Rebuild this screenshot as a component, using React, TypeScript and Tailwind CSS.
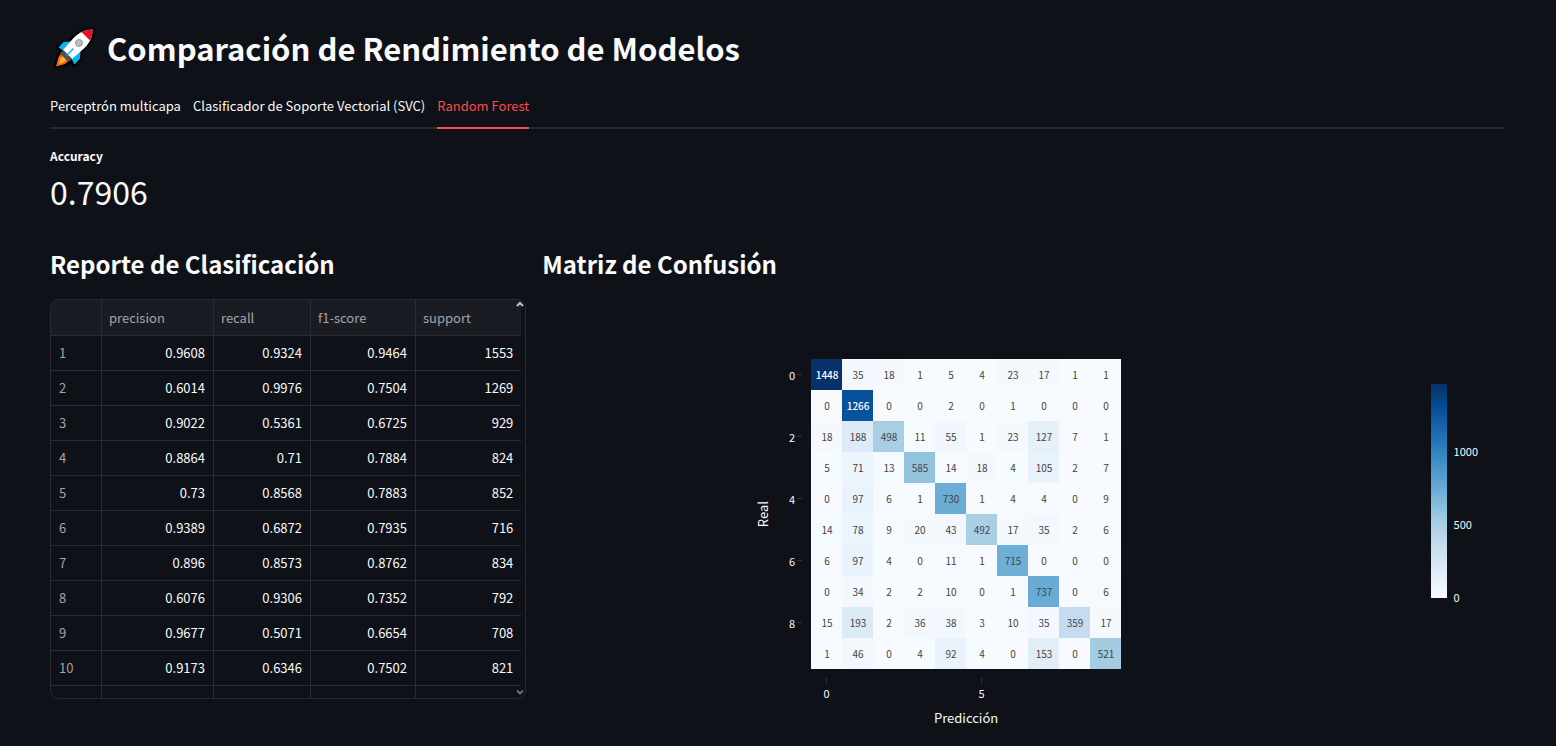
import React from "react";

const report: [string, string, string, string, string][] = [
  ["1", "0.9608", "0.9324", "0.9464", "1553"],
  ["2", "0.6014", "0.9976", "0.7504", "1269"],
  ["3", "0.9022", "0.5361", "0.6725", "929"],
  ["4", "0.8864", "0.71", "0.7884", "824"],
  ["5", "0.73", "0.8568", "0.7883", "852"],
  ["6", "0.9389", "0.6872", "0.7935", "716"],
  ["7", "0.896", "0.8573", "0.8762", "834"],
  ["8", "0.6076", "0.9306", "0.7352", "792"],
  ["9", "0.9677", "0.5071", "0.6654", "708"],
  ["10", "0.9173", "0.6346", "0.7502", "821"],
  ["", "", "", "", ""],
];

const matrix = [
  [1448, 35, 18, 1, 5, 4, 23, 17, 1, 1],
  [0, 1266, 0, 0, 2, 0, 1, 0, 0, 0],
  [18, 188, 498, 11, 55, 1, 23, 127, 7, 1],
  [5, 71, 13, 585, 14, 18, 4, 105, 2, 7],
  [0, 97, 6, 1, 730, 1, 4, 4, 0, 9],
  [14, 78, 9, 20, 43, 492, 17, 35, 2, 6],
  [6, 97, 4, 0, 11, 1, 715, 0, 0, 0],
  [0, 34, 2, 2, 10, 0, 1, 737, 0, 6],
  [15, 193, 2, 36, 38, 3, 10, 35, 359, 17],
  [1, 46, 0, 4, 92, 4, 0, 153, 0, 521],
];

const MAX = 1448;
const blues = [
  [247, 251, 255],
  [222, 235, 247],
  [198, 219, 239],
  [158, 202, 225],
  [107, 174, 214],
  [66, 146, 198],
  [33, 113, 181],
  [8, 81, 156],
  [8, 48, 107],
];

function blue(value: number) {
  const t = (value / MAX) * (blues.length - 1);
  const i = Math.min(Math.floor(t), blues.length - 2);
  const c = blues[i].map((a, k) => Math.round(a + (blues[i + 1][k] - a) * (t - i)));
  return `rgb(${c.join(",")})`;
}

function Rocket() {
  return (
    <svg viewBox="0 0 42 42" className="h-[42px] w-[42px] shrink-0" aria-hidden="true">
      <path
        d="M40 2C33 2 26 5 20.500 10L17 14 10 14.500 4.500 20.500 8 24 5 28.500 2 40 13 37.500 17.500 34 21 38.500 27.500 32 28 25 32 21C38 15 41 9 40 2Z"
        fill="#000"
        stroke="#000"
        strokeWidth="3"
        strokeLinejoin="round"
      />
      <path d="M18 14.500 10.500 15 5.500 20.500 11 24Z" fill="#00b7f1" />
      <path d="M27.500 24 27 31.500 21.500 37.500 18 31Z" fill="#00b7f1" />
      <path d="M8.500 26 16 33.500 12 37 3 39.500 5.500 30Z" fill="#f7630c" />
      <path d="M10 29 13.500 32.500 10.500 35.500 6 37 7 32Z" fill="#ffb02e" />
      <path d="M39.500 2.500C32 2.500 26 5.500 21 10.500L10 23 19 32 31.500 21C37 15.500 39.500 10 39.500 2.500Z" fill="#fff" />
      <path d="M39.500 2.500C35 2.500 31.500 3.500 28.500 5L37 13.500C39 10 39.500 7 39.500 2.500Z" fill="#e81224" />
      <path d="M10 23 7 26.500 15.500 35 19 32Z" fill="#505050" />
      <path d="M13.500 28.500 20.500 21.500" stroke="#00b7f1" strokeWidth="1.500" />
      <circle cx="26" cy="16" r="3.500" fill="#bfbfbf" stroke="#999" strokeWidth="1" />
    </svg>
  );
}

function Chevron({ down = false }: { down?: boolean }) {
  return (
    <svg viewBox="0 0 8 7" className="h-[7px] w-2" aria-hidden="true">
      <path
        d={down ? "M1 1.500 4 4.500 7 1.500" : "M1 5 4 2 7 5"}
        fill="none"
        stroke={down ? "#6b6b6b" : "#c1c1c1"}
        strokeWidth="2"
      />
    </svg>
  );
}

const tabs = ["Perceptrón multicapa", "Clasificador de Soporte Vectorial (SVC)", "Random Forest"];
const headers = ["precision", "recall", "f1-score", "support"];

function ReportTable() {
  return (
    <div className="relative h-[400px] overflow-hidden rounded-lg border border-[#282a30] pr-1">
      <table className="w-full table-fixed border-separate border-spacing-0 text-[13px] leading-5 text-[#fafafa]">
        <colgroup>
          <col className="w-[51px]" />
          <col className="w-[112px]" />
          <col className="w-[97px]" />
          <col className="w-[105px]" />
          <col />
        </colgroup>
        <thead>
          <tr className="h-9 bg-[#1a1c24] text-left text-[#a3a4a8]">
            <th aria-label="index" className="border-r border-b border-[#2b2d33] p-0" />
            {headers.map((h) => (
              <th key={h} scope="col" className="border-r border-b border-[#2b2d33] px-[7px] py-0 font-normal last:border-r-0">
                {h}
              </th>
            ))}
          </tr>
        </thead>
        <tbody>
          {report.map((row, r) => (
            <tr key={r} className="h-[35px]">
              {row.map((v, c) =>
                c === 0 ? (
                  <th key={c} scope="row" className="border-r border-b border-[#2b2d33] px-2 py-0 text-left font-normal text-[#a3a4a8]">
                    {v}
                  </th>
                ) : (
                  <td key={c} className="border-r border-b border-[#2b2d33] px-2 py-0 text-right last:border-r-0">
                    {v}
                  </td>
                ),
              )}
            </tr>
          ))}
        </tbody>
      </table>
      <div className="absolute top-px right-px">
        <Chevron />
      </div>
      <div className="absolute right-px bottom-0.5">
        <Chevron down />
      </div>
    </div>
  );
}

function ConfusionChart() {
  return (
    <div className="flex pt-[60px] text-[11px] leading-4 text-[#fafafa]">
      <div className="grow-[213]" />
      <div className="grid grid-cols-[auto_auto_auto]">
        <div className="flex items-center">
          <span className="rotate-180 text-[13px] [writing-mode:vertical-rl]">Real</span>
        </div>
        <div className="grid grid-rows-5 pr-[9px] pl-[18px]">
          {[0, 2, 4, 6, 8].map((n) => (
            <div key={n} className="flex h-[31px] items-center gap-[2px]">
              <span>{n}</span>
              <span className="h-px w-[5px] bg-[#31333f]" />
            </div>
          ))}
        </div>
        <table className="border-collapse text-center text-[10px] text-[#444]">
          <tbody>
            {matrix.map((row, r) => (
              <tr key={r}>
                {row.map((v, c) => (
                  <td
                    key={c}
                    className={
                      v > 1000
                        ? "h-[31px] w-[31px] min-w-[31px] p-0 pl-px font-medium text-white"
                        : "h-[31px] w-[31px] min-w-[31px] p-0 pl-px"
                    }
                    style={{ backgroundColor: blue(v) }}
                  >
                    {v}
                  </td>
                ))}
              </tr>
            ))}
          </tbody>
        </table>
        <div className="col-start-3 grid grid-cols-2 pt-[9px]">
          {[0, 5].map((n) => (
            <div key={n} className="flex w-[31px] flex-col items-center gap-[2px]">
              <span className="h-[5px] w-px bg-[#31333f]" />
              <span>{n}</span>
            </div>
          ))}
        </div>
        <div className="col-start-3 pt-[9px] text-center text-[13px]">Predicción</div>
      </div>
      <div className="grow-[310]" />
      <div className="flex gap-[7px] pt-[25px] pr-[25px]">
        <div className="h-[214px] w-4 bg-[linear-gradient(to_top,#f7fbff,#deebf7,#c6dbef,#9ecae1,#6baed6,#4292c6,#2171b5,#08519c,#08306b)]" />
        <div className="flex h-[221px] flex-col justify-end gap-[57px]">
          <span>1000</span>
          <span>500</span>
          <span>0</span>
        </div>
      </div>
    </div>
  );
}

export default function App() {
  return (
    <main className="min-h-screen bg-[#0e1117] pt-6 pr-[53px] pl-[50px] font-['Noto_Sans_CJK_SC','Noto_Sans',sans-serif] text-[#fafafa]">
      <h1 className="flex items-center gap-3 pl-[3px] text-[31px] leading-[48px] font-semibold">
        <Rocket />
        Comparación de Rendimiento de Modelos
      </h1>
      <div role="tablist" className="mt-[14px] flex gap-3 border-b-2 border-[#262830] text-[13px] leading-5">
        {tabs.map((t, i) => (
          <button
            key={t}
            type="button"
            role="tab"
            aria-selected={i === 2}
            className={
              i === 2
                ? "-mb-0.5 h-[43px] border-b-2 border-[#ff4b4b] pb-[2px] text-[#ff4b4b]"
                : "-mb-0.5 h-[43px] border-b-2 border-transparent pb-[2px]"
            }
          >
            {t}
          </button>
        ))}
      </div>
      <section className="pt-[17px]">
        <h2 className="text-[12px] leading-5 font-semibold">Accuracy</h2>
        <p className="text-[32px] leading-[50px]">0.7906</p>
      </section>
      <div className="grid grid-cols-[476fr_960fr] gap-4 pt-[30px]">
        <section>
          <h2 className="pb-[17px] text-[24px] leading-9 font-semibold">Reporte de Clasificación</h2>
          <ReportTable />
        </section>
        <section>
          <h2 className="pb-[17px] text-[24px] leading-9 font-semibold">Matriz de Confusión</h2>
          <ConfusionChart />
        </section>
      </div>
    </main>
  );
}
